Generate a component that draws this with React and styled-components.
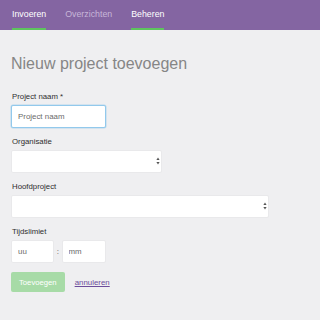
import React from "react";
import styled, { createGlobalStyle } from "styled-components";

const Global = createGlobalStyle`
  html, body { margin: 0; padding: 0; background: #efeff1; }
  body { font-family: "Liberation Sans", Arial, sans-serif; }
  * { box-sizing: border-box; }
`;

const Page = styled.div`
  width: 320px;
  height: 320px;
  background: #efeff1;
  overflow: hidden;
`;

const NavBar = styled.nav`
  height: 30px;
  background: #8465a2;
  display: flex;
  padding-left: 12px;
  gap: 19px;
`;

const NavItem = styled.a`
  display: flex;
  align-items: center;
  height: 30px;
  font-size: 8.8px;
  color: ${(p) => (p.$active ? "#ffffff" : "#c7b6d8")};
  border-bottom: 2px solid ${(p) => (p.$active ? "#5ec45e" : "transparent")};
  text-decoration: none;
`;

const Content = styled.main`
  padding: 24px 11px 0 11px;
`;

const Title = styled.h1`
  margin: 0 0 18px 0;
  font-size: 16px;
  line-height: 20px;
  font-weight: normal;
  color: #868686;
`;

const Group = styled.div`
  margin-bottom: 9.5px;
`;

const Label = styled.label`
  display: block;
  font-size: 7.8px;
  line-height: 10px;
  color: #2e2e2e;
  margin-bottom: 2.5px;
  padding-left: 1px;
`;

const TextInput = styled.input`
  display: block;
  width: ${(p) => p.$w}px;
  height: 23px;
  border: 1px solid ${(p) => (p.$focus ? "#92c9ec" : "#e9e9eb")};
  box-shadow: ${(p) => (p.$focus ? "0 0 0 0.5px rgba(146,201,236,0.6)" : "none")};
  border-radius: 2px;
  background: #fff;
  padding: 0 6px;
  font-family: "Liberation Sans", Arial, sans-serif;
  font-size: 7.9px;
  color: #333;
  outline: none;
  &::placeholder { color: #6a6a6a; }
`;

const SelectWrap = styled.div`
  position: relative;
  width: ${(p) => p.$w}px;
  height: 23px;
`;

const Select = styled.select`
  appearance: none;
  -webkit-appearance: none;
  width: 100%;
  height: 23px;
  border: 1px solid #e9e9eb;
  border-radius: 2px;
  background: #fff;
  outline: none;
  font-family: "Liberation Sans", Arial, sans-serif;
  font-size: 8px;
`;

const Arrows = styled.svg`
  position: absolute;
  right: 2px;
  top: 7.5px;
  width: 4px;
  height: 8px;
  pointer-events: none;
`;

const TimeRow = styled.div`
  display: flex;
  align-items: center;
`;

const Colon = styled.span`
  width: 7.5px;
  text-align: center;
  font-size: 8px;
  color: #555;
`;

const Actions = styled.div`
  display: flex;
  align-items: center;
  margin-top: 6.5px;
`;

const Button = styled.button`
  height: 20px;
  padding: 0 8px;
  border: none;
  border-radius: 2px;
  background: #a7dba7;
  color: #fff;
  font-family: "Liberation Sans", Arial, sans-serif;
  font-size: 7.7px;
`;

const Link = styled.a`
  margin-left: 10px;
  font-size: 7.9px;
  color: #6c4c9b;
  text-decoration: underline;
`;

const ArrowIcon = () => (
  <Arrows viewBox="0 0 4 8">
    <path d="M2 0.5 L3.6 3 L0.4 3 Z" fill="#555" />
    <path d="M2 7.5 L3.6 5 L0.4 5 Z" fill="#555" />
  </Arrows>
);

export default function App() {
  return (
    <Page>
      <Global />
      <NavBar>
        <NavItem $active>Invoeren</NavItem>
        <NavItem>Overzichten</NavItem>
        <NavItem $active>Beheren</NavItem>
      </NavBar>
      <Content>
        <Title>Nieuw project toevoegen</Title>
        <Group>
          <Label>Project naam *</Label>
          <TextInput $w={95} $focus placeholder="Project naam" />
        </Group>
        <Group>
          <Label>Organisatie</Label>
          <SelectWrap $w={151}>
            <Select>
              <option></option>
            </Select>
            <ArrowIcon />
          </SelectWrap>
        </Group>
        <Group>
          <Label>Hoofdproject</Label>
          <SelectWrap $w={258}>
            <Select>
              <option></option>
            </Select>
            <ArrowIcon />
          </SelectWrap>
        </Group>
        <Group>
          <Label>Tijdslimiet</Label>
          <TimeRow>
            <TextInput $w={43} placeholder="uu" />
            <Colon>:</Colon>
            <TextInput $w={44} placeholder="mm" />
          </TimeRow>
        </Group>
        <Actions>
          <Button>Toevoegen</Button>
          <Link href="#">annuleren</Link>
        </Actions>
      </Content>
    </Page>
  );
}
